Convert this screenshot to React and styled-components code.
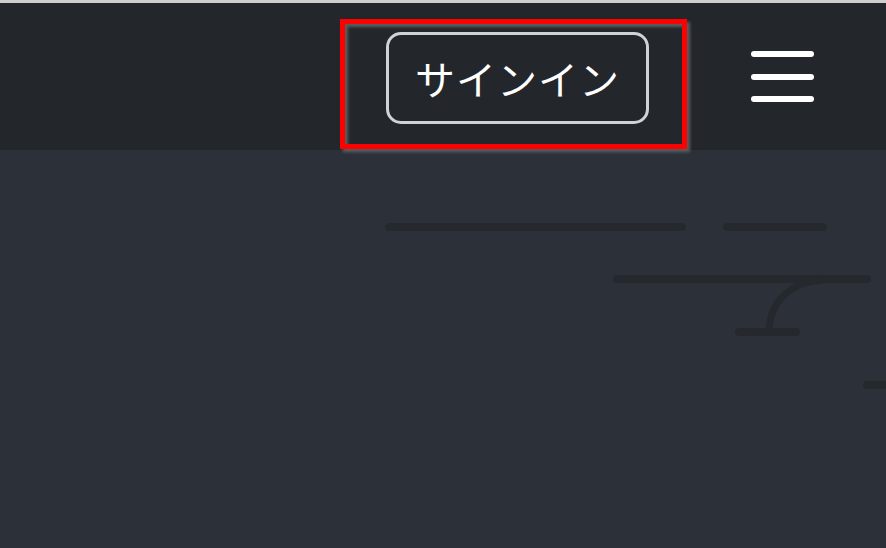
import React from 'react';
import styled, { createGlobalStyle } from 'styled-components';

const GlobalStyle = createGlobalStyle`
  html, body {
    margin: 0;
    padding: 0;
    background: #2c3038;
    font-family: 'Noto Sans CJK JP', 'Noto Sans', sans-serif;
  }
`;

const Page = styled.div`
  position: relative;
  width: 886px;
  height: 548px;
  overflow: hidden;
  background: #2c3038;
  border-top: 3px solid #cfcfcf;
  box-sizing: border-box;
`;

const Header = styled.header`
  height: 147px;
  background: #23272c;
  display: flex;
  align-items: center;
  justify-content: flex-end;
  gap: 102px;
  padding-right: 72px;
`;

const SignInButton = styled.button`
  box-sizing: border-box;
  width: 263px;
  height: 92px;
  margin-top: 2px;
  background: transparent;
  border: 3px solid #cfd3d8;
  border-radius: 15px;
  color: #ffffff;
  font-family: 'Noto Sans CJK JP', sans-serif;
  font-size: 40px;
  font-weight: 400;
  letter-spacing: 1px;
  display: flex;
  align-items: center;
  justify-content: center;
  padding: 0;
`;

const Burger = styled.button`
  width: 63px;
  height: 51px;
  background: none;
  border: none;
  padding: 0;
  display: flex;
  flex-direction: column;
  justify-content: space-between;
`;

const BurgerBar = styled.span`
  display: block;
  height: 6px;
  border-radius: 3px;
  background: #ffffff;
`;

const Highlight = styled.div`
  position: absolute;
  left: 340px;
  top: 16px;
  width: 347px;
  height: 130px;
  box-sizing: border-box;
  border: 5px solid #ff0000;
  box-shadow: 3px 3px 3px rgba(110, 110, 110, 0.75),
    inset 3px 3px 3px rgba(110, 110, 110, 0.75);
  pointer-events: none;
`;

const Decor = styled.svg`
  display: block;
`;

const Lines = () => (
  <Decor width="886" height="398" viewBox="0 150 886 398">
    <g stroke="#25292e" strokeWidth="8" strokeLinecap="round" fill="none">
      <line x1="389" y1="227" x2="682" y2="227" />
      <line x1="727" y1="227" x2="823" y2="227" />
      <line x1="617" y1="279" x2="867" y2="279" />
      <path d="M822 280 C 790 282 770 302 769 331" strokeWidth="7" />
      <line x1="739" y1="332" x2="796" y2="332" />
      <line x1="867" y1="385" x2="900" y2="385" />
    </g>
  </Decor>
);

export default function App() {
  return (
    <>
      <GlobalStyle />
      <Page>
        <Header>
          <SignInButton>サインイン</SignInButton>
          <Burger aria-label="menu">
            <BurgerBar />
            <BurgerBar />
            <BurgerBar />
          </Burger>
        </Header>
        <Lines />
        <Highlight />
      </Page>
    </>
  );
}
